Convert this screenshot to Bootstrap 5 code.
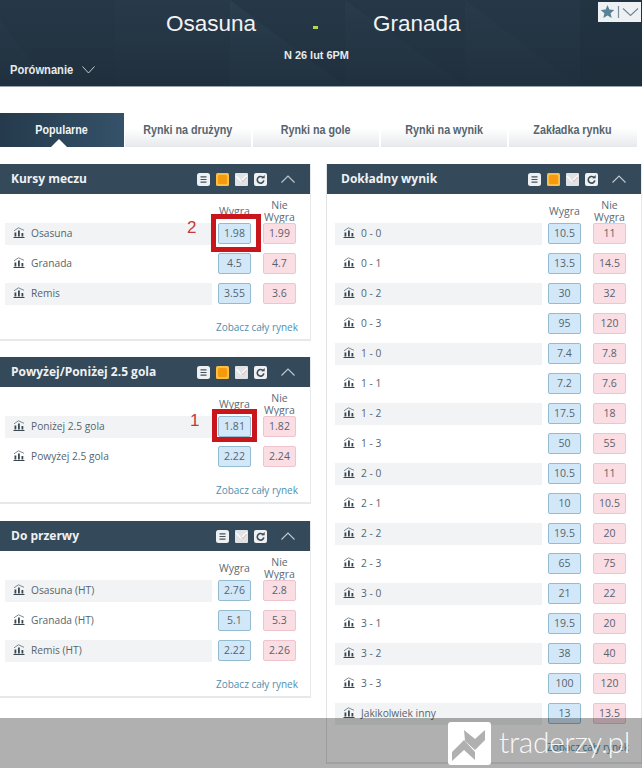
<!DOCTYPE html>
<html lang="pl">
<head>
    <meta charset="UTF-8">
    <meta name="viewport" content="width=device-width, initial-scale=1.0">
    <title>Osasuna - Granada</title>
    <link href="https://cdn.jsdelivr.net/npm/bootstrap@5.3.0/dist/css/bootstrap.min.css" rel="stylesheet">
    <style>
        html, body { height: 768px; overflow: hidden; }
        body {
            position: relative;
            background: #fff;
            font-family: "Open Sans", "Liberation Sans", sans-serif;
            font-size: 10.5px;
            color: #56646e;
        }
        /* match header */
        .hero {
            position: relative;
            height: 87px;
            background: #263848;
            border-bottom: 1px solid #9aa3a9;
            color: #fff;
            font-family: "Liberation Sans", sans-serif;
        }
        .hero-bg { position: absolute; left: 0; top: 0; width: 100%; height: 100%; }
        .team {
            position: absolute;
            top: 9px;
            font-size: 22.5px;
            line-height: 30px;
            color: #f1f3f4;
        }
        .team-dash { position: absolute; left: 313px; top: 26px; width: 5px; height: 3px; background: #b5d64a; }
        .match-date {
            position: absolute;
            left: 284px;
            top: 48px;
            font-size: 11.5px;
            font-weight: 700;
            line-height: 14px;
            color: #e6eaec;
            transform: scaleX(.95);
            transform-origin: left center;
            white-space: nowrap;
        }
        .compare {
            position: absolute;
            left: 10px;
            top: 63px;
            font-size: 12px;
            font-weight: 700;
            line-height: 15px;
            color: #e6eaec;
            transform: scaleX(.93);
            transform-origin: left center;
            white-space: nowrap;
        }
        .compare-arrow { position: absolute; left: 82px; top: 66px; }
        .fav-box {
            position: absolute;
            left: 598px;
            top: 2px;
            width: 43px;
            height: 20px;
            background: #eef1f3;
        }
        /* tabs */
        .tab-strip { margin: 26px 5px 0 0; gap: 2px; height: 34px; }
        .tab-item {
            display: flex;
            align-items: center;
            justify-content: center;
            position: relative;
            flex: 0 0 126px;
            height: 34px;
            padding: 0;
            font-family: "Liberation Sans", sans-serif;
            font-size: 12.5px;
            font-weight: 700;
            color: #56646e;
            text-decoration: none;
            background: linear-gradient(#fff 45%, #e6e9eb);
        }
        .tab-item:last-child { flex-basis: 128px; }
        .tab-item span { display: block; transform: scaleX(.86); white-space: nowrap; }
        .tab-item.on { flex-basis: 124px; margin-right: -1px; color: #f1f4f5; background: linear-gradient(90deg, #253a4c, #34526a); }
        .tab-item.on::after {
            content: "";
            position: absolute;
            left: 51px;
            bottom: 0;
            border: 8px solid transparent;
            border-top: 0;
            border-bottom-color: #fff;
        }
        /* panels */
        .columns { margin-top: 17px; gap: 15px; align-items: flex-start; }
        .col-left { flex: 0 0 311px; }
        .col-right { flex: 0 0 316px; }
        .market {
            border: 0;
            border-radius: 0;
            border-right: 1px solid #e6e9eb;
            border-bottom: 2px solid #e6e9eb;
            margin-bottom: 16px;
            background: #fff;
        }
        .market + .market + .market { margin-top: 17px; }
        .col-right .market { border-left: 1px solid #dfe3e6; height: 600px; margin: 0; }
        .market-head {
            display: flex;
            align-items: center;
            height: 30px;
            padding: 0 15px 0 11px;
            border: 0;
            border-radius: 0 !important;
            background: #34495a;
            color: #eef1f3;
            font-size: 12px;
            font-weight: 700;
        }
        .col-right .market-head { padding-left: 14px; }
        .head-icons { margin-left: auto; gap: 6px; }
        .head-icons svg { display: block; }
        .head-icons .arrow-up { margin-left: 8px; }
        .market-body { padding: 0 0 0 5px; }
        .col-right .market-body { padding-left: 8px; }
        .head-row { height: 29px; align-items: center; padding-top: 5px; }
        .col-title {
            width: 45px;
            text-align: center;
            line-height: 12px;
            color: #5c6a74;
        }
        .title-space { width: 207px; }
        .odds-row { height: 21px; margin-bottom: 9px; }
        .row-name {
            display: flex;
            align-items: center;
            width: 207px;
            height: 22px;
            padding-left: 8px;
            gap: 6px;
            font-size: 10.2px;
            white-space: nowrap;
        }
        .row-name svg { margin-top: -3px; }
        .odds-row.shade .row-name { background: #f1f3f4; }
        .odd-wrap { position: relative; }
        .odd-wrap.first, .odd-wrap.second { width: 33px; }
        .odd-wrap.first { margin-left: 6px; }
        .odd-wrap.second { margin-left: 12px; }
        .odd {
            display: block;
            width: 33px;
            height: 21px;
            padding: 0;
            border-radius: 2px;
            font-size: 10.5px;
            line-height: 19px;
            color: #56646e;
        }
        .odd.win { background: #d2e8f8; border: 1px solid #93bcd0; }
        .odd.lose { background: #fbdde4; border: 1px solid #eec4ce; }
        .link-row { text-align: right; padding: 7px 12px 5px 0; font-size: 10px; line-height: 14px; }
        .link-row a { color: #4f8fb0; text-decoration: none; }
        /* red annotations */
        .mark-box { position: absolute; border: 5px solid #c9161d; pointer-events: none; }
        .mark-num { position: absolute; font-family: "Liberation Sans", sans-serif; font-size: 17px; line-height: 18px; color: #c43a3c; }
        /* watermark */
        .stamp {
            position: absolute;
            left: 0;
            top: 718px;
            width: 642px;
            height: 50px;
            background: rgba(0, 0, 0, .31);
        }
        .stamp-logo { position: absolute; left: 448px; top: 4px; }
        .stamp-text {
            position: absolute;
            left: 499px;
            top: 3px;
            font-family: "Lato", sans-serif;
            font-weight: 300;
            font-size: 30px;
            letter-spacing: -.4px;
            line-height: 40px;
            color: rgba(255, 255, 255, .92);
            white-space: nowrap;
        }
    </style>
</head>
<body>
    <svg width="0" height="0" class="d-block">
        <symbol id="ic-chart" viewBox="0 0 12 11">
            <path d="M.5 10.500h11" stroke="#3a4852" stroke-width="1" fill="none"/>
            <path d="M1.500 5.500h1.800v4H1.500zM5 3.500h1.800v6H5zM8.500 6h1.800v3.500H8.500z" fill="#3a4852"/>
            <path d="M1 3.800 5.500.8 11 3.300" stroke="#7d8992" stroke-width="1" fill="none"/>
        </symbol>
        <symbol id="ic-list" viewBox="0 0 13 13">
            <rect width="13" height="13" rx="2.500" fill="#eef1f3"/>
            <path d="M3.500 3.800h6M3.500 6.500h6M3.500 9.200h6" stroke="#46545e" stroke-width="1.200"/>
        </symbol>
        <symbol id="ic-live" viewBox="0 0 13 13">
            <rect width="13" height="13" rx="1.500" fill="#fbbf45"/>
            <rect x="2" y="2" width="9" height="9" rx="1.500" fill="#f59a0d"/>
        </symbol>
        <symbol id="ic-mail" viewBox="0 0 13 13">
            <rect width="13" height="13" rx="1" fill="#dfe3e6"/>
            <path d="M1 3 6 8l6-5.500" stroke="#fff" stroke-width="1.200" fill="none"/>
            <path d="M6 6.500 8 8.500 11.500 4" stroke="#e7b6b6" stroke-width="1" fill="none"/>
        </symbol>
        <symbol id="ic-reload" viewBox="0 0 13 13">
            <rect width="13" height="13" rx="2" fill="#eef1f3"/>
            <path d="M9.300 5A3.300 3.300 0 1 0 9.800 7.300" stroke="#3f4d57" stroke-width="1.600" fill="none"/>
            <path d="M7.400 5.300h3.300V2z" fill="#3f4d57"/>
        </symbol>
        <symbol id="ic-up" viewBox="0 0 14 8">
            <path d="M.5 7.500 7 1l6.500 6.500" stroke="#c3ccd2" stroke-width="1.100" fill="none"/>
        </symbol>
        <linearGradient id="hero-fade" x1="0" y1="0" x2="0" y2="1">
            <stop offset="0" stop-color="#1d2c39" stop-opacity="0"/>
            <stop offset="1" stop-color="#1d2c39" stop-opacity=".75"/>
        </linearGradient>
    </svg>

    <header class="hero">
        <svg class="hero-bg" viewBox="0 0 642 86" preserveAspectRatio="none">
            <polygon points="0,20 50,86 0,86" fill="#293c4c"/>
            <polygon points="115,0 230,0 230,86 115,86" fill="#283a4a"/>
            <polygon points="230,0 345,86 230,86" fill="#2b3f4f"/>
            <polygon points="345,0 465,86 345,86" fill="#293c4c"/>
            <polygon points="465,0 580,86 465,86" fill="#293b4b"/>
            <polygon points="580,0 642,0 642,86 580,86" fill="#223342"/>
            <rect width="642" height="86" fill="url(#hero-fade)"/>
        </svg>
        <div class="team" style="left:166px">Osasuna</div>
        <div class="team-dash"></div>
        <div class="team" style="left:373px">Granada</div>
        <div class="match-date">N 26 lut 6PM</div>
        <div class="compare">Porównanie</div>
        <svg class="compare-arrow" width="13" height="8" viewBox="0 0 13 8"><path d="M.5.5 6.500 7 12.500.5" stroke="#c3ccd2" fill="none"/></svg>
        <div class="fav-box">
            <svg width="43" height="20" viewBox="0 0 43 20">
                <path d="m9.500 3 1.900 4.600 4.900.4-3.700 3.200 1.100 4.800-4.200-2.600-4.200 2.600 1.100-4.800L2.700 8l4.900-.4z" fill="#5a8296"/>
                <path d="M20.500 4v12" stroke="#7b8d98" stroke-width="1.200"/>
                <path d="m25 6.500 7.500 7 7.500-7" stroke="#6f8593" stroke-width="1.100" fill="none"/>
            </svg>
        </div>
    </header>

    <nav class="nav tab-strip flex-nowrap">
        <a class="tab-item on" href="#"><span>Popularne</span></a>
        <a class="tab-item" href="#"><span>Rynki na drużyny</span></a>
        <a class="tab-item" href="#"><span>Rynki na gole</span></a>
        <a class="tab-item" href="#"><span>Rynki na wynik</span></a>
        <a class="tab-item" href="#"><span>Zakładka rynku</span></a>
    </nav>

    <main class="d-flex columns">
        <div class="col-left">
            <section class="card market">
                <div class="card-header market-head">
                    <span>Kursy meczu</span>
                    <span class="d-flex align-items-center head-icons">
                        <svg width="13" height="13"><use href="#ic-list"/></svg>
                        <svg width="13" height="13"><use href="#ic-live"/></svg>
                        <svg width="13" height="13"><use href="#ic-mail"/></svg>
                        <svg width="13" height="13"><use href="#ic-reload"/></svg>
                        <svg class="arrow-up" width="14" height="8"><use href="#ic-up"/></svg>
                    </span>
                </div>
                <div class="market-body">
                    <div class="d-flex head-row"><div class="title-space"></div><div class="col-title">Wygra</div><div class="col-title">Nie<br>Wygra</div></div>
                    <div class="d-flex odds-row shade">
                        <div class="row-name"><svg width="12" height="11"><use href="#ic-chart"/></svg>Osasuna</div>
                        <div class="odd-wrap first"><button class="btn odd win">1.98</button><span class="mark-box" style="left:-7px;top:-9px;width:50px;height:38px"></span><span class="mark-num" style="left:-31px;top:-4px">2</span></div>
                        <div class="odd-wrap second"><button class="btn odd lose">1.99</button></div>
                    </div>
                    <div class="d-flex odds-row">
                        <div class="row-name"><svg width="12" height="11"><use href="#ic-chart"/></svg>Granada</div>
                        <div class="odd-wrap first"><button class="btn odd win">4.5</button></div>
                        <div class="odd-wrap second"><button class="btn odd lose">4.7</button></div>
                    </div>
                    <div class="d-flex odds-row shade">
                        <div class="row-name"><svg width="12" height="11"><use href="#ic-chart"/></svg>Remis</div>
                        <div class="odd-wrap first"><button class="btn odd win">3.55</button></div>
                        <div class="odd-wrap second"><button class="btn odd lose">3.6</button></div>
                    </div>
                    <div class="link-row"><a href="#">Zobacz cały rynek</a></div>
                </div>
            </section>

            <section class="card market">
                <div class="card-header market-head">
                    <span>Powyżej/Poniżej 2.5 gola</span>
                    <span class="d-flex align-items-center head-icons">
                        <svg width="13" height="13"><use href="#ic-list"/></svg>
                        <svg width="13" height="13"><use href="#ic-live"/></svg>
                        <svg width="13" height="13"><use href="#ic-mail"/></svg>
                        <svg width="13" height="13"><use href="#ic-reload"/></svg>
                        <svg class="arrow-up" width="14" height="8"><use href="#ic-up"/></svg>
                    </span>
                </div>
                <div class="market-body">
                    <div class="d-flex head-row"><div class="title-space"></div><div class="col-title">Wygra</div><div class="col-title">Nie<br>Wygra</div></div>
                    <div class="d-flex odds-row shade">
                        <div class="row-name"><svg width="12" height="11"><use href="#ic-chart"/></svg>Poniżej 2.5 gola</div>
                        <div class="odd-wrap first"><button class="btn odd win">1.81</button><span class="mark-box" style="left:-6px;top:-7px;width:45px;height:33px"></span><span class="mark-num" style="left:-28px;top:-4px">1</span></div>
                        <div class="odd-wrap second"><button class="btn odd lose">1.82</button></div>
                    </div>
                    <div class="d-flex odds-row">
                        <div class="row-name"><svg width="12" height="11"><use href="#ic-chart"/></svg>Powyżej 2.5 gola</div>
                        <div class="odd-wrap first"><button class="btn odd win">2.22</button></div>
                        <div class="odd-wrap second"><button class="btn odd lose">2.24</button></div>
                    </div>
                    <div class="link-row"><a href="#">Zobacz cały rynek</a></div>
                </div>
            </section>

            <section class="card market">
                <div class="card-header market-head">
                    <span>Do przerwy</span>
                    <span class="d-flex align-items-center head-icons">
                        <svg width="13" height="13"><use href="#ic-list"/></svg>
                        <svg width="13" height="13"><use href="#ic-mail"/></svg>
                        <svg width="13" height="13"><use href="#ic-reload"/></svg>
                        <svg class="arrow-up" width="14" height="8"><use href="#ic-up"/></svg>
                    </span>
                </div>
                <div class="market-body">
                    <div class="d-flex head-row"><div class="title-space"></div><div class="col-title">Wygra</div><div class="col-title">Nie<br>Wygra</div></div>
                    <div class="d-flex odds-row shade">
                        <div class="row-name"><svg width="12" height="11"><use href="#ic-chart"/></svg>Osasuna (HT)</div>
                        <div class="odd-wrap first"><button class="btn odd win">2.76</button></div>
                        <div class="odd-wrap second"><button class="btn odd lose">2.8</button></div>
                    </div>
                    <div class="d-flex odds-row">
                        <div class="row-name"><svg width="12" height="11"><use href="#ic-chart"/></svg>Granada (HT)</div>
                        <div class="odd-wrap first"><button class="btn odd win">5.1</button></div>
                        <div class="odd-wrap second"><button class="btn odd lose">5.3</button></div>
                    </div>
                    <div class="d-flex odds-row shade">
                        <div class="row-name"><svg width="12" height="11"><use href="#ic-chart"/></svg>Remis (HT)</div>
                        <div class="odd-wrap first"><button class="btn odd win">2.22</button></div>
                        <div class="odd-wrap second"><button class="btn odd lose">2.26</button></div>
                    </div>
                    <div class="link-row"><a href="#">Zobacz cały rynek</a></div>
                </div>
            </section>
        </div>

        <div class="col-right">
            <section class="card market">
                <div class="card-header market-head">
                    <span>Dokładny wynik</span>
                    <span class="d-flex align-items-center head-icons">
                        <svg width="13" height="13"><use href="#ic-list"/></svg>
                        <svg width="13" height="13"><use href="#ic-live"/></svg>
                        <svg width="13" height="13"><use href="#ic-mail"/></svg>
                        <svg width="13" height="13"><use href="#ic-reload"/></svg>
                        <svg class="arrow-up" width="14" height="8"><use href="#ic-up"/></svg>
                    </span>
                </div>
                <div class="market-body" id="scores"></div>
            </section>
        </div>
    </main>

    <div class="stamp">
        <svg class="stamp-logo" width="43" height="43" viewBox="0 0 43 43">
            <rect width="43" height="43" rx="3" fill="#fff"/>
            <path d="M16 8 27 17 37 8V18L27 28 17 19z" fill="#b0b0b0"/>
            <path d="M4 30 16 18 27 30V38L16 28 4 39z" fill="#b0b0b0"/>
        </svg>
        <div class="stamp-text">traderzy.pl</div>
    </div>

    <script src="https://cdn.jsdelivr.net/npm/bootstrap@5.3.0/dist/js/bootstrap.bundle.min.js"></script>
    <script>
        // score rows of the right panel
        const scores = [
            ['0 - 0', '10.5', '11'], ['0 - 1', '13.5', '14.5'], ['0 - 2', '30', '32'], ['0 - 3', '95', '120'],
            ['1 - 0', '7.4', '7.8'], ['1 - 1', '7.2', '7.6'], ['1 - 2', '17.5', '18'], ['1 - 3', '50', '55'],
            ['2 - 0', '10.5', '11'], ['2 - 1', '10', '10.5'], ['2 - 2', '19.5', '20'], ['2 - 3', '65', '75'],
            ['3 - 0', '21', '22'], ['3 - 1', '19.5', '20'], ['3 - 2', '38', '40'], ['3 - 3', '100', '120'],
            ['Jakikolwiek inny', '13', '13.5']
        ];
        document.getElementById('scores').innerHTML =
            '<div class="d-flex head-row"><div class="title-space"></div><div class="col-title">Wygra</div><div class="col-title">Nie<br>Wygra</div></div>' +
            scores.map((s, i) => `
                <div class="d-flex odds-row ${i % 2 === 0 ? 'shade' : ''}">
                    <div class="row-name"><svg width="12" height="11"><use href="#ic-chart"/></svg>${s[0]}</div>
                    <div class="odd-wrap first"><button class="btn odd win">${s[1]}</button></div>
                    <div class="odd-wrap second"><button class="btn odd lose">${s[2]}</button></div>
                </div>`).join('') +
            '<div class="link-row"><a href="#">Zobacz cały rynek</a></div>';
    </script>
</body>
</html>
